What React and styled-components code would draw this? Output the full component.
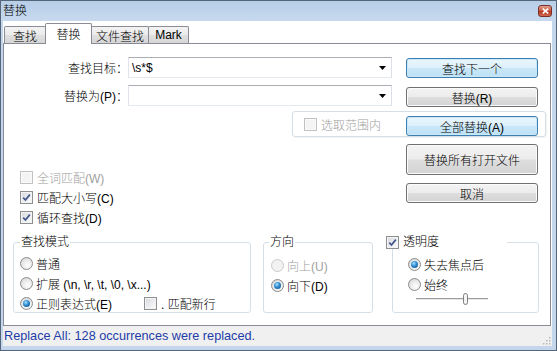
import React from "react";
import styled, { createGlobalStyle } from "styled-components";

const Global = createGlobalStyle`
  html, body { margin: 0; padding: 0; background: #fff; }
  body {
    font-family: "Liberation Sans", "Noto Sans CJK SC", sans-serif;
    font-size: 12px;
    font-weight: 300;
    color: #000;
  }
  * { box-sizing: border-box; }
`;

const Window = styled.div`
  width: 557px;
  height: 351px;
  border: 1px solid #56667a;
  background: #c3d6eb;
  display: flex;
  flex-direction: column;
  overflow: hidden;
`;

const TitleBar = styled.div`
  height: 20px;
  flex: none;
  display: flex;
  align-items: center;
  justify-content: space-between;
  padding: 0 4px 0 2px;
  background: linear-gradient(#b8cfe8, #c6d9ee);
  line-height: 14px;
`;

const TitleText = styled.span`
  font-size: 12px;
  color: #000;
`;

const CloseButton = styled.div`
  width: 14px;
  height: 12px;
  border: 1px solid #7a3026;
  border-radius: 3px;
  background: linear-gradient(#e0a092, #c9563f 50%, #b83a24 55%, #cf6c52);
  display: flex;
  align-items: center;
  justify-content: center;
`;

const Client = styled.div`
  flex: 1;
  margin: 0 4px 4px 2px;
  background: #fff;
  display: flex;
  flex-direction: column;
`;

const TabStrip = styled.div`
  height: 22px;
  flex: none;
  display: flex;
  align-items: flex-end;
  padding-left: 1px;
  position: relative;
  z-index: 1;
`;

const Tab = styled.div`
  width: ${(p) => p.$w}px;
  height: ${(p) => (p.$active ? 21 : 17)}px;
  margin-left: ${(p) => (p.$first ? 0 : -1)}px;
  margin-bottom: ${(p) => (p.$active ? -1 : 0)}px;
  padding-bottom: ${(p) => (p.$active ? 2 : 0)}px;
  border: 1px solid #898c95;
  border-bottom: none;
  border-radius: 2px 2px 0 0;
  background: ${(p) =>
    p.$active ? "#fff" : "linear-gradient(#f3f3f3, #ebebeb 50%, #e0e0e0 50%, #d6d6d6)"};
  display: flex;
  align-items: center;
  justify-content: center;
  white-space: nowrap;
  position: relative;
  z-index: ${(p) => (p.$active ? 2 : 0)};
`;

const Panel = styled.div`
  height: 283px;
  flex: none;
  margin-right: 1px;
  border: 1px solid #898c95;
  background: #fff;
  padding-top: 13px;
  display: flex;
  flex-direction: column;
`;

const TopGrid = styled.div`
  display: grid;
  grid-template-columns: 402px 132px 1fr;
  grid-template-rows: 50px 30px 90px;
`;

const FieldStack = styled.div`
  grid-column: 1;
  grid-row: 1;
  display: flex;
  flex-direction: column;
  gap: 7px;
`;

const FieldRow = styled.div`
  display: grid;
  grid-template-columns: 124px 264px;
  align-items: center;
  height: 21px;
`;

const FieldLabel = styled.span`
  text-align: right;
  white-space: nowrap;
`;

const Combo = styled.div`
  height: 21px;
  border: 1px solid;
  border-color: #abadb3 #dbdfe6 #e3e9ef #e2e3ea;
  background: #fff;
  display: flex;
  align-items: center;
  padding: 0 5px 0 3px;
`;

const ComboText = styled.span`
  flex: 1;
  white-space: nowrap;
`;

const ButtonStack = styled.div`
  grid-column: 2;
  grid-row: ${(p) => p.$row};
  display: flex;
  flex-direction: column;
  padding-top: ${(p) => p.$pt}px;
  gap: ${(p) => p.$gap}px;
`;

const Btn = styled.div`
  height: ${(p) => p.$h || 20}px;
  width: 132px;
  border: 1px solid ${(p) => (p.$primary ? "#3c7fb1" : "#707070")};
  border-radius: 3px;
  background: ${(p) =>
    p.$primary
      ? "linear-gradient(#eaf6fd, #dcf0fb 48%, #c9e7f8 52%, #bde1f5)"
      : "linear-gradient(#f3f3f3, #ececec 48%, #dedede 52%, #d3d3d3)"};
  box-shadow: inset 0 0 0 1px ${(p) => (p.$primary ? "#cbe8f8" : "#fbfbfb")};
  display: flex;
  align-items: center;
  justify-content: center;
  white-space: nowrap;
`;

const OverlayCell = styled.div`
  grid-column: 2;
  grid-row: 2;
  align-self: start;
  margin-top: 9px;
  z-index: 1;
`;

const SelectionBox = styled.div`
  grid-column: 1 / -1;
  grid-row: 2;
  align-self: start;
  margin: 4px 4px 0 288px;
  height: 26px;
  border: 1px solid #d5dfe5;
  border-radius: 3px;
  box-shadow: 1px 1px 0 #f3f3f3;
  display: flex;
  align-items: center;
  padding-left: 11px;
`;

const CheckList = styled.div`
  grid-column: 1;
  grid-row: 3;
  padding: 30px 0 0 16px;
  display: flex;
  flex-direction: column;
`;

const ItemRow = styled.div`
  height: 20px;
  display: flex;
  align-items: center;
  gap: ${(p) => p.$gap ?? 4}px;
  width: ${(p) => (p.$w ? `${p.$w}px` : "auto")};
  flex: none;
  color: ${(p) => (p.$disabled ? "#a0a0a0" : "#000")};
  white-space: nowrap;
`;

const Line = styled.div`
  display: flex;
  align-items: center;
`;

const BoxMark = styled.span`
  width: 13px;
  height: 13px;
  flex: none;
  border: 1px solid ${(p) => (p.$disabled ? "#c2c2c2" : "#8e8f8f")};
  background: ${(p) =>
    p.$disabled ? "#f4f4f4" : "linear-gradient(135deg, #d4d8de, #f2f3f5 70%, #fbfbfb)"};
  box-shadow: inset 0 0 0 1px ${(p) => (p.$disabled ? "#fafafa" : "#f4f4f4")};
  display: flex;
  align-items: center;
  justify-content: center;
`;

const RadioMark = styled.span`
  width: 13px;
  height: 13px;
  flex: none;
  border-radius: 50%;
  border: 1px solid ${(p) => (p.$disabled ? "#cacaca" : "#8b8c8d")};
  background: ${(p) =>
    p.$disabled
      ? "#f2f2f2"
      : "radial-gradient(circle at 60% 65%, #ffffff 0%, #ececec 45%, #cdcdcd 100%)"};
  display: flex;
  align-items: center;
  justify-content: center;
  &::after {
    content: "";
    display: ${(p) => (p.$checked ? "block" : "none")};
    width: 7px;
    height: 7px;
    border-radius: 50%;
    background: radial-gradient(circle at 40% 35%, #a6e0ff 0%, #2d8ad0 45%, #0d3f72 100%);
  }
`;

const GroupRow = styled.div`
  margin-top: 8px;
  padding-left: 9px;
  display: flex;
`;

const Group = styled.fieldset`
  width: ${(p) => p.$w}px;
  height: 78px;
  margin: 0 0 0 ${(p) => p.$ml}px;
  border: 1px solid #d5dfe5;
  border-radius: 3px;
  padding: 0;
  min-width: 0;
`;

const GroupBody = styled.div`
  padding: ${(p) => p.$pt}px 0 0 ${(p) => p.$pl}px;
  display: flex;
  flex-direction: column;
`;

const Legend = styled.legend`
  margin-left: ${(p) => p.$ml}px;
  padding: 0 1px;
  height: 14px;
  line-height: 14px;
  display: flex;
  align-items: center;
  white-space: nowrap;
`;

/* the transparency checkbox sits over the group frame's corner */
const CheckLegend = styled.legend`
  margin-left: 0;
  padding: 0;
  width: 114px;
  height: 14px;
  line-height: 14px;
  display: flex;
  align-items: center;
  gap: 4px;
  position: relative;
  left: -7px;
  background: #fff;
`;

const Slider = styled.svg`
  margin: -1px 0 0 8px;
  display: block;
`;

const StatusBar = styled.div`
  height: 20px;
  flex: none;
  background: #f0f0f0;
  display: flex;
  align-items: center;
  justify-content: space-between;
  padding-left: 1px;
  color: #1f3ca8;
  font-size: 12.7px;
  font-weight: 400;
  white-space: nowrap;
`;

const Grip = styled.svg`
  align-self: flex-end;
  margin: 0 1px 1px 0;
`;

const Tick = () => (
  <svg width="9" height="9" viewBox="0 0 9 9">
    <path d="M1.2 4.6 L3.5 7 L7.8 1.6" fill="none" stroke="#42568a" strokeWidth="1.7" />
  </svg>
);

const Check = ({ checked, disabled, children }) => (
  <ItemRow $disabled={disabled}>
    <BoxMark $disabled={disabled}>{checked && <Tick />}</BoxMark>
    <span>{children}</span>
  </ItemRow>
);

const Radio = ({ checked, disabled, w, children }) => (
  <ItemRow $disabled={disabled} $w={w} $gap={3}>
    <RadioMark $checked={checked} $disabled={disabled} />
    <span>{children}</span>
  </ItemRow>
);

const Arrow = () => (
  <svg width="7" height="4" viewBox="0 0 7 4">
    <path d="M0 0 H7 L3.5 4 Z" fill="#000" />
  </svg>
);

const tabs = [
  { label: "查找", w: 42 },
  { label: "替换", w: 47, active: true },
  { label: "文件查找", w: 58 },
  { label: "Mark", w: 41 },
];

export default function App() {
  return (
    <>
      <Global />
      <Window>
        <TitleBar>
          <TitleText>替换</TitleText>
          <CloseButton>
            <svg width="7" height="6" viewBox="0 0 7 6">
              <path d="M0.8 0.6 L6.2 5.4 M6.2 0.6 L0.8 5.4" stroke="#fff" strokeWidth="1.6" />
            </svg>
          </CloseButton>
        </TitleBar>
        <Client>
          <TabStrip>
            {tabs.map((t, i) => (
              <Tab key={t.label} $w={t.w} $active={t.active} $first={i === 0}>
                {t.label}
              </Tab>
            ))}
          </TabStrip>
          <Panel>
            <TopGrid>
              <FieldStack>
                <FieldRow>
                  <FieldLabel>查找目标：</FieldLabel>
                  <Combo>
                    <ComboText>{"\\s*$"}</ComboText>
                    <Arrow />
                  </Combo>
                </FieldRow>
                <FieldRow>
                  <FieldLabel>替换为(P)：</FieldLabel>
                  <Combo>
                    <ComboText />
                    <Arrow />
                  </Combo>
                </FieldRow>
              </FieldStack>
              <ButtonStack $row={1} $pt={1} $gap={9}>
                <Btn $primary>查找下一个</Btn>
                <Btn>替换(R)</Btn>
              </ButtonStack>
              <SelectionBox>
                <Check disabled>选取范围内</Check>
              </SelectionBox>
              <OverlayCell>
                <Btn $primary>全部替换(A)</Btn>
              </OverlayCell>
              <CheckList>
                <Check disabled>全词匹配(W)</Check>
                <Check checked>匹配大小写(C)</Check>
                <Check checked>循环查找(D)</Check>
              </CheckList>
              <ButtonStack $row={3} $pt={7} $gap={8}>
                <Btn $h={31}>替换所有打开文件</Btn>
                <Btn>取消</Btn>
              </ButtonStack>
            </TopGrid>
            <GroupRow>
              <Group $w={238} $ml={0}>
                <Legend $ml={6}>查找模式</Legend>
                <GroupBody $pt={4} $pl={6}>
                  <Radio>普通</Radio>
                  <Radio>{"扩展 (\\n, \\r, \\t, \\0, \\x...)"}</Radio>
                  <Line>
                    <Radio checked w={124}>正则表达式(E)</Radio>
                    <Check>. 匹配新行</Check>
                  </Line>
                </GroupBody>
              </Group>
              <Group $w={110} $ml={12}>
                <Legend $ml={5}>方向</Legend>
                <GroupBody $pt={6} $pl={7}>
                  <Radio disabled>向上(U)</Radio>
                  <Radio checked>向下(D)</Radio>
                </GroupBody>
              </Group>
              <Group $w={147} $ml={19}>
                <CheckLegend>
                  <BoxMark>
                    <Tick />
                  </BoxMark>
                  <span>透明度</span>
                </CheckLegend>
                <GroupBody $pt={5} $pl={15}>
                  <Radio checked>失去焦点后</Radio>
                  <Radio>始终</Radio>
                  <Slider width="74" height="12" viewBox="0 0 74 12">
                    <rect x="0" y="5" width="72" height="1" fill="#9c9c9c" />
                    <rect x="0" y="6" width="72" height="1" fill="#e6e6e6" />
                    <rect x="47.5" y="0.5" width="4" height="11" rx="2" fill="#f4f4f4" stroke="#7f7f7f" />
                  </Slider>
                </GroupBody>
              </Group>
            </GroupRow>
          </Panel>
          <StatusBar>
            <span>Replace All: 128 occurrences were replaced.</span>
            <Grip width="9" height="9" viewBox="0 0 9 9">
              {[
                [7, 1], [7, 4], [4, 4], [7, 7], [4, 7], [1, 7],
              ].map(([x, y]) => (
                <rect key={`${x}-${y}`} x={x} y={y} width="1.5" height="1.5" fill="#b8b8b8" />
              ))}
            </Grip>
          </StatusBar>
        </Client>
      </Window>
    </>
  );
}
